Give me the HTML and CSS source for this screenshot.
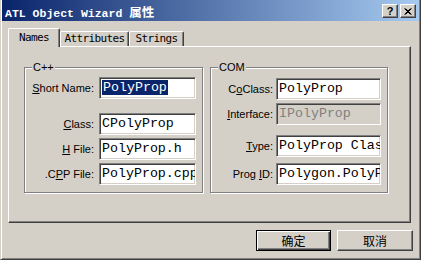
FILE: index.html
```html
<!DOCTYPE html>
<html>
<head>
<meta charset="utf-8">
<link rel="stylesheet" href="styles.css">
</head>
<body>
<div class="window">
  <div class="titlebar">
    <span class="title">ATL Object Wizard <span class="cjk">属性</span></span>
    <div class="caption-btns">
      <span class="cbtn help">?</span>
      <span class="cbtn close"><svg width="8" height="7" viewBox="0 0 8 7"><path d="M0.5 0.5L6.5 6.5M1.5 0.5L7.5 6.5M6.5 0.5L0.5 6.5M7.5 0.5L1.5 6.5" stroke="#000" stroke-width="1" fill="none"/></svg></span>
    </div>
  </div>
  <div class="body">
    <div class="tabs">
      <div class="tab active">Names</div>
      <div class="tab t-attr">Attributes</div>
      <div class="tab t-str">Strings</div>
    </div>
    <div class="panel">
      <div class="group g-cpp">
        <span class="legend">C++</span>
        <div class="row r1"><label><u>S</u>hort Name:</label><div class="field"><span class="sel">PolyProp</span></div></div>
        <div class="row r2"><label><u>C</u>lass:</label><div class="field">CPolyProp</div></div>
        <div class="row r3"><label><u>H</u> File:</label><div class="field">PolyProp.h</div></div>
        <div class="row r4"><label>.C<u>P</u>P File:</label><div class="field">PolyProp.cpp</div></div>
      </div>
      <div class="group g-com">
        <span class="legend">COM</span>
        <div class="row r1"><label>C<u>o</u>Class:</label><div class="field">PolyProp</div></div>
        <div class="row r2"><label><u>I</u>nterface:</label><div class="field disabled">IPolyProp</div></div>
        <div class="row r3"><label><u>T</u>ype:</label><div class="field">PolyProp Class</div></div>
        <div class="row r4"><label>Prog <u>I</u>D:</label><div class="field">Polygon.PolyProp</div></div>
      </div>
    </div>
    <div class="buttons">
      <button class="btn default">确定</button>
      <button class="btn">取消</button>
    </div>
  </div>
</div>
</body>
</html>
```
FILE: styles.css
```css
* { box-sizing: border-box; margin: 0; padding: 0; }
html, body { width: 421px; height: 260px; overflow: hidden; }
body {
  background: #d4d0c8;
  font-family: "Liberation Sans", Arial, sans-serif;
  font-size: 11px;
  color: #000;
}
.window {
  width: 421px;
  height: 260px;
  background: #d4d0c8;
  border-left: 1px solid #d4d0c8;
  border-right: 1px solid #404040;
  border-bottom: 1px solid #404040;
  box-shadow: inset 1px 0 0 #fff, inset -1px -1px 0 #808080;
  padding: 0 1px 1px 1px;
  display: flex;
  flex-direction: column;
}
.titlebar {
  height: 21px;
  background: linear-gradient(to right, #0a246a, #a6caf0);
  display: flex;
  justify-content: space-between;
  align-items: flex-start;
  padding-left: 3px;
}
.title {
  color: #fff;
  font-family: "Liberation Mono", "Noto Sans CJK SC", monospace;
  font-weight: bold;
  font-size: 11.5px;
  line-height: 24px;
  white-space: nowrap;
}
.title .cjk { font-family: "Noto Sans CJK SC", sans-serif; font-size: 12.5px; }
.caption-btns { display: flex; gap: 2px; margin-top: 4px; margin-right: 3px; }
.cbtn {
  width: 16px;
  height: 14px;
  background: #d4d0c8;
  border-top: 1px solid #fff;
  border-left: 1px solid #fff;
  border-right: 1px solid #404040;
  border-bottom: 1px solid #404040;
  box-shadow: inset -1px -1px 0 #808080;
  display: flex;
  align-items: center;
  justify-content: center;
  font-family: "Liberation Sans", Arial, sans-serif;
  font-weight: bold;
  font-size: 11px;
  line-height: 11px;
}
.cbtn svg { display: block; }
.body { flex: 1; padding: 7px 0 0 6px; display: flex; flex-direction: column; }
.tabs {
  display: flex;
  align-items: flex-end;
  height: 19px;
  position: relative;
  z-index: 1;
}
.tab {
  height: 15px;
  margin-bottom: 1px;
  background: #d4d0c8;
  border-top: 1px solid #fff;
  border-left: 1px solid #fff;
  border-right: 1px solid #404040;
  box-shadow: inset -1px 0 0 #808080;
  border-radius: 2px 2px 0 0;
  font-family: "DejaVu Sans Mono", monospace;
  font-size: 11px;
  letter-spacing: -0.6px;
  line-height: 13px;
  text-align: center;
  white-space: nowrap;
}
.tab.active { width: 52px; height: 19px; margin-bottom: 0; line-height: 17px; }
.t-attr { width: 69px; }
.t-str { width: 55px; }
.panel {
  width: 403px;
  height: 177px;
  margin-top: -1px;
  border-top: 1px solid #fff;
  border-left: 1px solid #fff;
  border-right: 1px solid #404040;
  border-bottom: 1px solid #404040;
  box-shadow: inset -1px -1px 0 #808080;
  display: flex;
  align-items: flex-start;
  gap: 7px;
  padding: 20px 0 0 15px;
}
.group {
  position: relative;
  height: 126px;
  border: 1px solid #808080;
  box-shadow: inset 1px 1px 0 #fff, 1px 1px 0 #fff;
  display: flex;
  flex-direction: column;
}
.g-cpp { width: 179px; }
.g-com { width: 178px; }
.legend {
  position: absolute;
  top: -7px;
  left: 7px;
  padding: 0 1px;
  background: #d4d0c8;
  line-height: 12px;
}
.row { display: flex; align-items: center; height: 22px; }
.row label { text-align: right; white-space: nowrap; }
.g-cpp label { width: 69px; margin-right: 5px; }
.g-cpp .field { width: 97px; }
.g-com label { width: 62px; margin-right: 3px; }
.g-com .field { width: 105px; }
.g-cpp .r1 { margin-top: 9px; }
.g-cpp .r2 { margin-top: 14px; }
.g-cpp .r3 { margin-top: 3px; }
.g-cpp .r4 { margin-top: 3px; }
.g-com .r1 { margin-top: 10px; }
.g-com .r2 { margin-top: 3px; }
.g-com .r3 { margin-top: 10px; }
.g-com .r4 { margin-top: 6px; }
.field {
  height: 22px;
  background: #fff;
  border-top: 1px solid #808080;
  border-left: 1px solid #808080;
  border-right: 1px solid #fff;
  border-bottom: 1px solid #fff;
  box-shadow: inset 1px 1px 0 #404040, inset -1px -1px 0 #d4d0c8;
  padding-left: 2px;
  font-family: "Liberation Mono", monospace;
  font-size: 13.3px;
  line-height: 20px;
  white-space: nowrap;
  overflow: hidden;
}
.field.disabled { background: #d4d0c8; color: #808080; }
.sel { background: #0a246a; color: #fff; padding: 0 1px; }
.buttons {
  display: flex;
  justify-content: flex-end;
  gap: 6px;
  margin-top: 7px;
  padding-right: 6px;
}
.btn {
  width: 75px;
  height: 21px;
  background: #d4d0c8;
  border-top: 1px solid #fff;
  border-left: 1px solid #fff;
  border-right: 1px solid #404040;
  border-bottom: 1px solid #404040;
  box-shadow: inset -1px -1px 0 #808080;
  font-family: "Noto Sans CJK SC", sans-serif;
  font-size: 12px;
  line-height: 17px;
  color: #000;
}
.btn + .btn { width: 76px; }
.btn.default {
  border: 1px solid #000;
  box-shadow: inset 1px 1px 0 #fff, inset -1px -1px 0 #404040, inset -2px -2px 0 #808080;
}
```
